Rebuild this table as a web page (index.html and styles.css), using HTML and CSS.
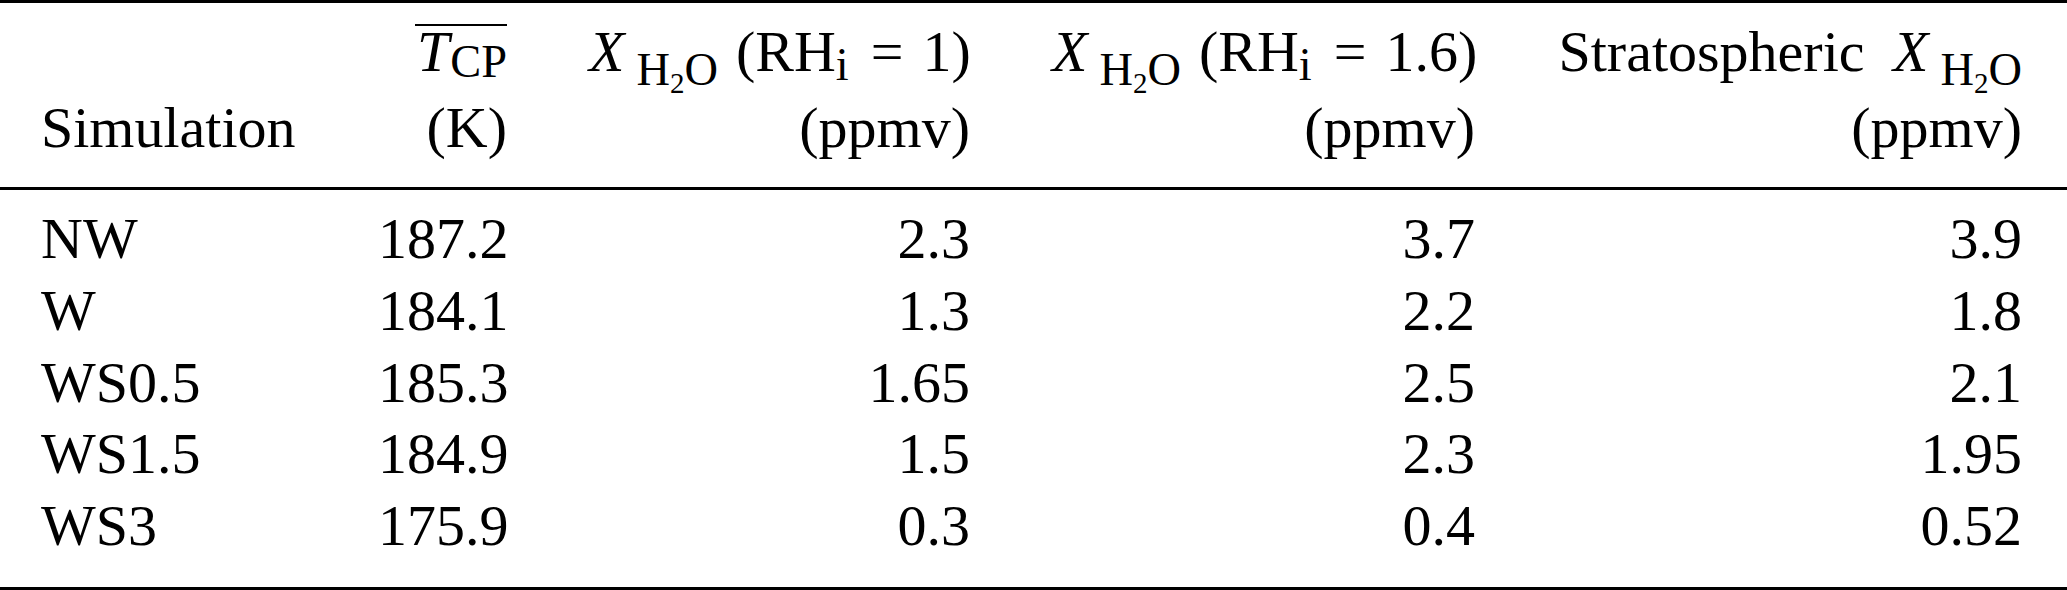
FILE: index.html
```html
<!DOCTYPE html>
<html lang="en">
<head>
    <meta charset="UTF-8">
    <title>Simulation table</title>
    <link rel="stylesheet" href="styles.css">
</head>
<body>
    <table class="sim-table">
        <colgroup>
            <col class="col-sim">
            <col class="col-tcp">
            <col class="col-rh1">
            <col class="col-rh16">
            <col class="col-strat">
        </colgroup>
        <thead>
            <tr>
                <th class="name">Simulation</th>
                <th>
                    <div class="head-line"><span class="mean"><i>T</i><span class="sub sub-cp">CP</span></span></div>
                    <div class="head-line">(K)</div>
                </th>
                <th>
                    <div class="head-line"><i>X</i><span class="sub sub-h2o">H<span class="sub2">2</span>O</span>(RH<span class="sub sub-i">i</span><span class="rel">=</span>1)</div>
                    <div class="head-line">(ppmv)</div>
                </th>
                <th>
                    <div class="head-line"><i>X</i><span class="sub sub-h2o">H<span class="sub2">2</span>O</span>(RH<span class="sub sub-i">i</span><span class="rel">=</span>1.6)</div>
                    <div class="head-line">(ppmv)</div>
                </th>
                <th>
                    <div class="head-line">Stratospheric <i class="var-gap">X</i><span class="sub sub-h2o end">H<span class="sub2">2</span>O</span></div>
                    <div class="head-line">(ppmv)</div>
                </th>
            </tr>
        </thead>
        <tbody>
            <tr><td class="name">NW</td><td>187.2</td><td>2.3</td><td>3.7</td><td>3.9</td></tr>
            <tr><td class="name">W</td><td>184.1</td><td>1.3</td><td>2.2</td><td>1.8</td></tr>
            <tr><td class="name">WS0.5</td><td>185.3</td><td>1.65</td><td>2.5</td><td>2.1</td></tr>
            <tr><td class="name">WS1.5</td><td>184.9</td><td>1.5</td><td>2.3</td><td>1.95</td></tr>
            <tr><td class="name">WS3</td><td>175.9</td><td>0.3</td><td>0.4</td><td>0.52</td></tr>
        </tbody>
    </table>
</body>
</html>
```

FILE: styles.css
```css
html, body {
    margin: 0;
    padding: 0;
    background: #fff;
}

body {
    font-family: "Liberation Serif", "Times New Roman", serif;
    font-size: 58px;
    color: #000;
}

.sim-table {
    width: 100%;
    table-layout: fixed;
    border-collapse: separate;
    border-spacing: 0;
    border-top: 3px solid #000;
    border-bottom: 3px solid #000;
}

.col-sim { width: 337px; }
.col-tcp { width: 211px; }
.col-rh1 { width: 463px; }
.col-rh16 { width: 505px; }
.col-strat { width: 551px; }

.sim-table th,
.sim-table td {
    padding: 0 41px;
    text-align: right;
    font-weight: normal;
    white-space: nowrap;
}

.sim-table th:last-child,
.sim-table td:last-child {
    padding-right: 45px;
}

.sim-table .name {
    text-align: left;
}

/* header: two lines, rule below */
.sim-table th {
    padding-top: 11px;
    padding-bottom: 21px;
    border-bottom: 3px solid #000;
    vertical-align: bottom;
    line-height: 76px;
}

.head-line {
    line-height: 76px;
}

.mean {
    display: inline-block;
    line-height: 52px;
    padding-left: 2px;
    border-top: 2px solid #000;
}

.sub {
    font-size: 0.8em;
    line-height: 0;
    vertical-align: -14px;
}

.sub-cp {
    margin-left: 1px;
    vertical-align: -6px;
}

.sub-h2o {
    margin-left: 12px;
    margin-right: 18px;
}

.sub-h2o.end {
    margin-right: 0;
}

.var-gap {
    margin-left: 14px;
}

.sub-i {
    margin-right: 3px;
    vertical-align: -9px;
}

.sub2 {
    font-size: 0.625em;
    line-height: 0;
    vertical-align: -8px;
}

.rel {
    margin: 0 19px;
}

/* body rows */
.sim-table td {
    line-height: 71.75px;
}

.sim-table tbody tr:first-child td {
    padding-top: 13px;
}

.sim-table tbody tr:last-child td {
    padding-bottom: 25px;
}
```
